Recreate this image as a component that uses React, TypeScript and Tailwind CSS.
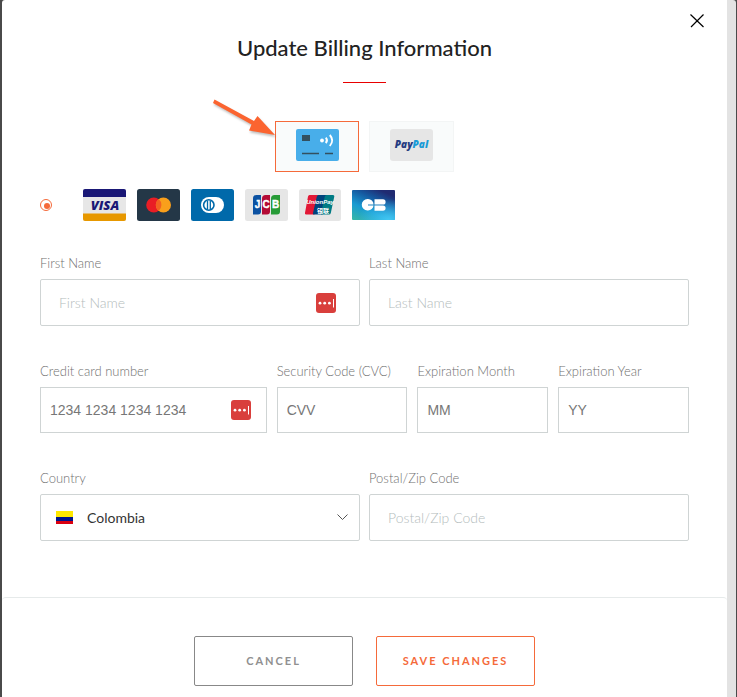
import { useState } from 'react'
import type { ReactNode } from 'react'

function VisaLogo() {
  return (
    <svg width="43" height="32" viewBox="0 0 43 32" role="img" aria-label="Visa">
      <rect width="43" height="32" rx="2" fill="#e7e7e7" />
      <path d="M0 8V2a2 2 0 0 1 2-2h39a2 2 0 0 1 2 2v6z" fill="#1a1876" />
      <path d="M0 24.500v5.500a2 2 0 0 0 2 2h39a2 2 0 0 0 2-2v-5.500z" fill="#e79800" />
      <text x="22" y="21" textAnchor="middle" fontSize="13" fontWeight="900" fontStyle="italic" fill="#1a1876" fontFamily="Open Sans, sans-serif">VISA</text>
    </svg>
  )
}

function MastercardLogo() {
  return (
    <svg width="43" height="32" viewBox="0 0 43 32" role="img" aria-label="Mastercard">
      <rect width="43" height="32" rx="2.500" fill="#243747" />
      <circle cx="16.800" cy="16" r="7.600" fill="#e91d25" />
      <circle cx="26.400" cy="16" r="7.600" fill="#f99f1b" />
      <path d="M21.600 10.100a7.600 7.600 0 0 1 0 11.800a7.600 7.600 0 0 1 0-11.800z" fill="#f26122" />
    </svg>
  )
}

function DinersLogo() {
  return (
    <svg width="43" height="32" viewBox="0 0 43 32" role="img" aria-label="Diners Club">
      <rect width="43" height="32" rx="2.500" fill="#0069aa" />
      <rect x="10" y="8" width="23" height="16" rx="8" fill="#fff" />
      <circle cx="17.800" cy="16" r="5.200" fill="none" stroke="#0069aa" strokeWidth="1.600" />
      <path d="M16.500 11.500v9M19.300 11.500v9" stroke="#0069aa" strokeWidth="1.300" />
    </svg>
  )
}

function JcbLogo() {
  return (
    <svg width="43" height="32" viewBox="0 0 43 32" role="img" aria-label="JCB">
      <rect width="43" height="32" rx="2.500" fill="#e6e6e6" />
      <path d="M8 9.500Q8 6 11.500 6H16v16.500q0 3-3 3H8z" fill="#0c52a2" />
      <path d="M17 9.500Q17 6 20.500 6H25v16.500q0 3-3 3h-5z" fill="#b30b35" />
      <path d="M26 9.500Q26 6 29.500 6H35v16.500q0 3-3 3h-6z" fill="#279b37" />
      <g fontFamily="Liberation Sans, sans-serif" fontSize="10" fontWeight="700" fill="#fff" textAnchor="middle" stroke="#fff" strokeWidth=".4">
        <text x="12.500" y="19">J</text>
        <text x="21" y="19">C</text>
        <text x="30.500" y="19">B</text>
      </g>
    </svg>
  )
}

function UnionPayLogo() {
  return (
    <svg width="42" height="32" viewBox="0 0 42 32" role="img" aria-label="UnionPay">
      <rect width="42" height="32" rx="2.500" fill="#e6e6e6" />
      <path d="M10.500 6H20l-4.500 19.500H7q-1.500 0-1-1.800L9 7.500Q9.300 6 10.500 6z" fill="#e21836" />
      <path d="M19.500 6h9L24 25.500H14.500q-.8 0-.5-1.500l3.800-16.500q.3-1.500 1.700-1.500z" fill="#00447c" />
      <path d="M27.500 6H34q1.600 0 1.300 1.600L31.800 24q-.4 1.500-1.800 1.500h-7.500q-.8 0-.5-1.500l3.800-16.500q.3-1.500 1.700-1.500z" fill="#007b84" />
      <text x="21" y="15" textAnchor="middle" fontSize="6" fontWeight="700" fontStyle="italic" fill="#fff" fontFamily="Liberation Sans, sans-serif">UnionPay</text>
      <text x="24" y="24" textAnchor="middle" fontSize="6" fontWeight="700" fill="#fff" fontFamily="Noto Sans CJK SC, sans-serif">银联</text>
    </svg>
  )
}

function CbLogo() {
  return (
    <svg width="43" height="30" viewBox="0 0 43 30" role="img" aria-label="Cartes Bancaires">
      <defs>
        <linearGradient id="cb" x1="0" y1="1" x2=".65" y2="0">
          <stop offset="0" stopColor="#39b8a5" />
          <stop offset=".4" stopColor="#189bd2" />
          <stop offset=".75" stopColor="#15589f" />
          <stop offset="1" stopColor="#202b72" />
        </linearGradient>
        <radialGradient id="cb-glow" cx=".85" cy="1" r=".7">
          <stop offset="0" stopColor="#42c7f3" />
          <stop offset="1" stopColor="#42c7f3" stopOpacity="0" />
        </radialGradient>
      </defs>
      <rect width="43" height="30" rx="1" fill="url(#cb)" />
      <rect width="43" height="30" rx="1" fill="url(#cb-glow)" />
      <path d="M21.500 14.500H16v1h5.500a5.500 5.500 0 0 1-5.500 5h-.500a5.700 5.700 0 0 1 0-11.500h.500a5.500 5.500 0 0 1 5.500 5.500zM22.500 9.300H31a2.500 2.500 0 0 1 0 5.200h-8.500zM22.500 15.500H31a2.500 2.500 0 0 1 0 5.200h-8.500z" fill="#fff" />
    </svg>
  )
}

function CardIcon() {
  return (
    <svg width="43" height="32" viewBox="0 0 43 32" aria-hidden="true">
      <rect width="43" height="32" rx="2" fill="#48aeea" />
      <rect x="6" y="6" width="8" height="6" fill="#33505f" />
      <path d="M6 24.500h17M29 24.500h8" stroke="#33505f" strokeWidth="1.700" />
      <circle cx="26" cy="11.500" r="1.900" fill="#fff" />
      <path d="M29.800 8.700q2.400 2.700 0 5.400M33.800 6q4.800 5.400 0 11" stroke="#fff" strokeWidth="1.900" fill="none" />
    </svg>
  )
}

function PaypalIcon() {
  return (
    <svg width="43" height="32" viewBox="0 0 43 32" role="img" aria-label="PayPal">
      <rect width="43" height="32" rx="3" fill="#e6e6e6" />
      <text x="21.500" y="19" textAnchor="middle" fontSize="10" fontWeight="800" fontStyle="italic" fontFamily="Open Sans, sans-serif">
        <tspan fill="#253b80">Pay</tspan>
        <tspan fill="#179bd7">Pal</tspan>
      </text>
    </svg>
  )
}

function FillButton({ className }: { className: string }) {
  return (
    <button type="button" aria-label="Fill with password manager" className={`absolute top-1/2 -translate-y-1/2 ${className}`}>
      <svg className="block" width="20" height="20" viewBox="0 0 20 20">
        <rect width="20" height="20" rx="3" fill="#d93f3c" />
        <circle cx="4" cy="10.200" r="1.400" fill="#fff" />
        <circle cx="8.700" cy="10.200" r="1.400" fill="#fff" />
        <circle cx="13.400" cy="10.200" r="1.400" fill="#fff" />
        <path d="M17.500 6v8.500" stroke="#fff" />
      </svg>
    </button>
  )
}

interface FieldProps {
  id: string
  label: string
  children: ReactNode
}

function Field({ id, label, children }: FieldProps) {
  return (
    <div className="min-w-0">
      <label htmlFor={id} className="block h-6 text-[13px] leading-4 font-light text-[#707070]">{label}</label>
      <div className="relative">{children}</div>
    </div>
  )
}

const textInput = 'block h-[47px] w-full rounded-[2px] border border-[#cfd4d4] bg-white px-[18px] text-[14px] font-light text-[#222] outline-none placeholder:text-[#b4bcbc]'
const cardInput = 'block h-[46px] w-full border border-[#cfd4d4] bg-white px-[9px] font-["Liberation_Sans",sans-serif] text-[14px] text-[#222] outline-none placeholder:text-[#777]'

export default function App() {
  const [method, setMethod] = useState('card')

  return (
    <div className="min-h-screen bg-[#4a4a4a] pr-px pl-0.5 font-[Lato,sans-serif]">
      <div role="dialog" aria-labelledby="billing-title" className="relative min-h-screen rounded-t-[3px] border-r-9 border-[#e3e3e3] bg-white">
        <button type="button" aria-label="Close" className="absolute top-3.5 right-[23px]">
          <svg className="block" width="14" height="14" viewBox="0 0 14 14" stroke="#000" strokeWidth="1.200">
            <path d="M.5.500l13 12.500M13.500.500L1 13" />
          </svg>
        </button>

        <form onSubmit={(e) => e.preventDefault()}>
          <div className="px-[38px] pb-14">
            <h1 id="billing-title" className="pt-8 text-center text-[22px] leading-8 font-medium text-[#222]">Update Billing Information</h1>
            <div className="mx-auto mt-[18px] h-px w-[43px] bg-[#e80000]" />

            <div className="relative mx-auto mt-[38px] flex w-fit gap-2.5">
              <button
                type="button"
                aria-label="Credit card"
                onClick={() => setMethod('card')}
                className={`flex h-[51px] w-[84px] justify-center border bg-[#f9fbfb] pt-[7px] ${method === 'card' ? 'border-[#f56a3a]' : 'border-[#f3f5f5]'}`}
              >
                <CardIcon />
              </button>
              <button
                type="button"
                onClick={() => setMethod('paypal')}
                className={`flex h-[51px] w-[85px] justify-center border bg-[#f9fbfb] pt-[7px] ${method === 'paypal' ? 'border-[#f56a3a]' : 'border-[#f3f5f5]'}`}
              >
                <PaypalIcon />
              </button>
              <svg className="pointer-events-none absolute -top-6 -left-16 drop-shadow-[1px_2px_1px_#00000040]" width="68" height="46" viewBox="0 0 68 46" aria-hidden="true">
                <path d="M3.500 2.500L2 6 40.500 27.500 38 33.500 64 38 46.500 19 43 24z" fill="#fb6430" />
              </svg>
            </div>

            <div className="mt-[17px] flex items-center">
              <input
                type="radio"
                name="card-type"
                aria-label="Credit or debit card"
                defaultChecked
                className="relative size-3 appearance-none rounded-full border border-[#f56a3a] before:absolute before:top-[3px] before:left-[3px] before:size-[6px] before:rounded-full before:bg-[#f56a3a]"
              />
              <div className="ml-[31px] flex items-center gap-[11px]">
                <VisaLogo />
                <MastercardLogo />
                <DinersLogo />
                <JcbLogo />
                <UnionPayLogo />
                <CbLogo />
              </div>
            </div>

            <div className="mt-[34px] flex flex-col gap-[37px]">
              <div className="grid grid-cols-2 gap-[9px]">
                <Field id="first-name" label="First Name">
                  <input id="first-name" className={textInput} placeholder="First Name" />
                  <FillButton className="right-6" />
                </Field>
                <Field id="last-name" label="Last Name">
                  <input id="last-name" className={textInput} placeholder="Last Name" />
                </Field>
              </div>

              <div className="grid grid-cols-[227fr_131fr_131fr_131fr] gap-2.5">
                <Field id="number" label="Credit card number">
                  <input id="number" className={cardInput} placeholder="1234 1234 1234 1234" />
                  <FillButton className="right-4" />
                </Field>
                <Field id="cvc" label="Security Code (CVC)">
                  <input id="cvc" className={cardInput} placeholder="CVV" />
                </Field>
                <Field id="month" label="Expiration Month">
                  <input id="month" className={cardInput} placeholder="MM" />
                </Field>
                <Field id="year" label="Expiration Year">
                  <input id="year" className={cardInput} placeholder="YY" />
                </Field>
              </div>

              <div className="grid grid-cols-2 gap-[9px]">
                <Field id="country" label="Country">
                  <select id="country" defaultValue="CO" className="block h-[47px] w-full appearance-none rounded-[2px] border border-[#cfd4d4] bg-white pr-8 pl-[46px] text-[14px] text-[#333] outline-none">
                    <option value="CO">Colombia</option>
                  </select>
                  <svg className="pointer-events-none absolute top-[17px] left-4" width="17" height="13" aria-hidden="true">
                    <path d="M0 0h17v6H0z" fill="#ffe800" />
                    <path d="M0 6h17v4H0z" fill="#00148e" />
                    <path d="M0 10h17v3H0z" fill="#da0010" />
                  </svg>
                  <svg className="pointer-events-none absolute top-5 right-3" width="11" height="7" fill="none" stroke="#555" aria-hidden="true">
                    <path d="M.5.500l5 5 5-5" />
                  </svg>
                </Field>
                <Field id="zip" label="Postal/Zip Code">
                  <input id="zip" className={textInput} placeholder="Postal/Zip Code" />
                </Field>
              </div>
            </div>
          </div>

          <div className="flex justify-center gap-[23px] rounded-t-[4px] border-t border-[#e6eaea] px-4 pt-[38px] pb-[11px]">
            <button type="button" className="h-[50px] w-[159px] rounded-[2px] border border-[#888] text-[11px] font-bold tracking-[2px] text-[#909090]">CANCEL</button>
            <button type="submit" className="h-[50px] w-[159px] rounded-[2px] border border-[#f56a3a] text-[11px] font-bold tracking-[2px] text-[#f56a3a]">SAVE CHANGES</button>
          </div>
        </form>
      </div>
    </div>
  )
}
